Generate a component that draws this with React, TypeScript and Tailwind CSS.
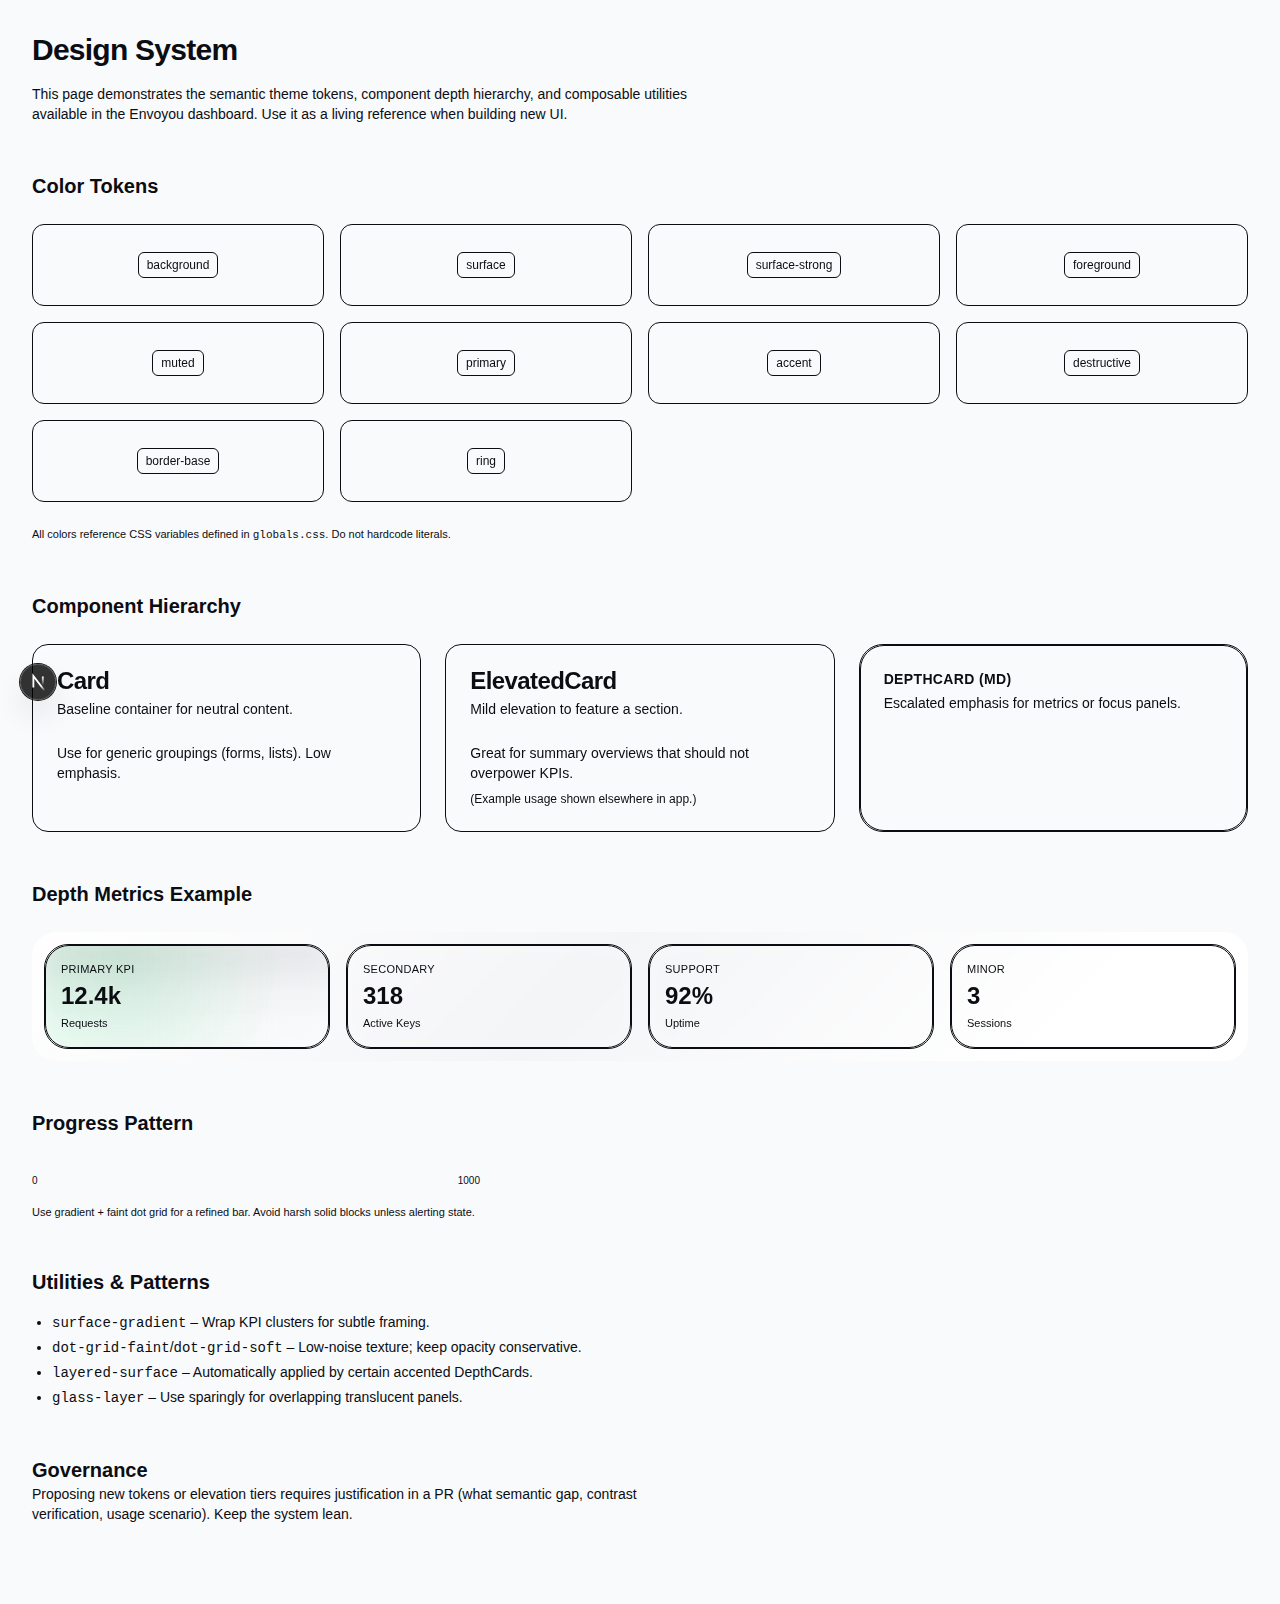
import type { ReactNode } from "react";

const TOKENS = [
  "background",
  "surface",
  "surface-strong",
  "foreground",
  "muted",
  "primary",
  "accent",
  "destructive",
  "border-base",
  "ring",
];

const METRICS = [
  { label: "PRIMARY KPI", value: "12.4k", hint: "Requests", accent: true },
  { label: "SECONDARY", value: "318", hint: "Active Keys", accent: false },
  { label: "SUPPORT", value: "92%", hint: "Uptime", accent: false },
  { label: "MINOR", value: "3", hint: "Sessions", accent: false },
];

const MONO = "font-['Liberation_Mono',monospace]";

function Heading({ children }: { children: ReactNode }) {
  return <h2 className="text-xl font-semibold">{children}</h2>;
}

function Card({ title, lead, children }: { title: string; lead: string; children: ReactNode }) {
  return (
    <div className="rounded-2xl border border-[#0b0d12] p-6 shadow-[inset_0_0_24px_rgba(255,255,255,0.35)] backdrop-blur-[1px]">
      <h3 className="text-2xl leading-6 font-semibold tracking-tight">{title}</h3>
      <p className="mt-1.5 text-sm">{lead}</p>
      <div className="mt-6 text-sm">{children}</div>
    </div>
  );
}

function DepthCard({ className, accent, children }: { className: string; accent?: boolean; children: ReactNode }) {
  return (
    <div className={`relative rounded-3xl border border-[#0b0d12] backdrop-blur-[1px] ${className}`}>
      {accent && (
        <div className="absolute inset-0 rounded-[inherit] bg-[radial-gradient(circle_at_28%_5%,rgba(34,160,90,0.12),rgba(34,160,90,0.03)_50%,transparent_75%),linear-gradient(to_bottom,rgba(0,0,0,0.085),rgba(0,0,0,0.025)_45%,transparent_80%),linear-gradient(to_right,rgba(230,250,239,0.8),rgba(232,248,240,0.7)_30%,rgba(248,249,251,0.8)_85%)]" />
      )}
      <div className="absolute inset-0 rounded-[inherit] border border-[#0b0d12] shadow-[inset_0_0_24px_rgba(255,255,255,0.35)]" />
      <div className="relative">{children}</div>
    </div>
  );
}

function DevBadge() {
  return (
    <div className="absolute top-[664px] left-5 flex size-9 items-center justify-center rounded-full bg-black/80 shadow-[0_0_0_1px_#171717,inset_0_0_0_1px_rgba(255,255,255,0.14),0_16px_32px_-8px_rgba(0,0,0,0.24)]">
      <svg className="size-10 shrink-0" viewBox="0 0 40 40" fill="none">
        <defs>
          <linearGradient id="diag" x1="9.95555" y1="11.1226" x2="15.4778" y2="17.9671" gradientUnits="userSpaceOnUse">
            <stop stopColor="white" />
            <stop offset="0.604072" stopColor="white" stopOpacity="0.15" />
          </linearGradient>
          <linearGradient id="stem" x1="11.8222" y1="1.40039" x2="11.791" y2="10.5" gradientUnits="userSpaceOnUse">
            <stop stopColor="white" />
            <stop offset="1" stopColor="white" stopOpacity="0" />
          </linearGradient>
        </defs>
        <g transform="translate(13 13)" strokeWidth="1.86">
          <path d="M13.3 15.2L2.34 1V12.6" stroke="url(#diag)" />
          <path d="M11.825 1.5V13.1" stroke="url(#stem)" />
        </g>
      </svg>
    </div>
  );
}

export default function App() {
  return (
    <div className="relative min-h-[1604px] bg-[#f9fafc] font-['Liberation_Sans',Arial,sans-serif] text-[#0b0d12]">
      <main className="space-y-12 p-8">
        <header className="space-y-4">
          <h1 className="text-3xl font-bold tracking-tight">Design System</h1>
          <p className="max-w-2xl text-sm">
            This page demonstrates the semantic theme tokens, component depth hierarchy, and composable utilities
            available in the Envoyou dashboard. Use it as a living reference when building new UI.
          </p>
        </header>

        <section className="space-y-6">
          <Heading>Color Tokens</Heading>
          <div className="grid grid-cols-4 gap-4">
            {TOKENS.map((t) => (
              <div key={t} className="flex h-[82px] items-center justify-center rounded-xl border border-[#0b0d12]">
                <span className="rounded-md border border-[#0b0d12] px-2 py-1 text-xs backdrop-blur-[1px]">{t}</span>
              </div>
            ))}
          </div>
          <p className="text-[11px]">
            All colors reference CSS variables defined in <code className={MONO}>globals.css</code>. Do not hardcode
            literals.
          </p>
        </section>

        <section className="space-y-6">
          <Heading>Component Hierarchy</Heading>
          <div className="grid h-[188px] grid-cols-3 gap-6">
            <Card title="Card" lead="Baseline container for neutral content.">
              <p>Use for generic groupings (forms, lists). Low emphasis.</p>
            </Card>
            <Card title="ElevatedCard" lead="Mild elevation to feature a section.">
              <p>Great for summary overviews that should not overpower KPIs.</p>
              <p className="mt-2 text-xs">(Example usage shown elsewhere in app.)</p>
            </Card>
            <DepthCard className="p-6">
              <h3 className="text-sm font-semibold tracking-wide">DEPTHCARD (MD)</h3>
              <p className="mt-1 text-sm">Escalated emphasis for metrics or focus panels.</p>
            </DepthCard>
          </div>
        </section>

        <section className="space-y-6">
          <Heading>Depth Metrics Example</Heading>
          <div className="grid grid-cols-4 gap-4 rounded-3xl bg-[linear-gradient(135deg,#ffffff_0%,#f4f5f7_45%,#ffffff_83%)] p-3">
            {METRICS.map((m) => (
              <DepthCard key={m.label} className="p-4" accent={m.accent}>
                <p className="text-[11px] tracking-wide">{m.label}</p>
                <p className="mt-[3px] text-2xl font-semibold">{m.value}</p>
                <p className="mt-[3px] text-[11px]">{m.hint}</p>
              </DepthCard>
            ))}
          </div>
        </section>

        <section className="space-y-6">
          <Heading>Progress Pattern</Heading>
          <div className="space-y-4">
            <div className="w-full max-w-md">
              <div className="h-3 rounded-full" />
              <div className="flex justify-between text-[10px]">
                <span>0</span>
                <span>1000</span>
              </div>
            </div>
            <p className="text-[11px]">
              Use gradient + faint dot grid for a refined bar. Avoid harsh solid blocks unless alerting state.
            </p>
          </div>
        </section>

        <section className="space-y-4">
          <Heading>Utilities &amp; Patterns</Heading>
          <ul className="list-disc space-y-1 pl-5 text-sm">
            <li>
              <code className={MONO}>surface-gradient</code> – Wrap KPI clusters for subtle framing.
            </li>
            <li>
              <code className={MONO}>dot-grid-faint</code>/<code className={MONO}>dot-grid-soft</code> – Low-noise
              texture; keep opacity conservative.
            </li>
            <li>
              <code className={MONO}>layered-surface</code> – Automatically applied by certain accented DepthCards.
            </li>
            <li>
              <code className={MONO}>glass-layer</code> – Use sparingly for overlapping translucent panels.
            </li>
          </ul>
        </section>

        <section>
          <Heading>Governance</Heading>
          <p className="max-w-2xl text-sm">
            Proposing new tokens or elevation tiers requires justification in a PR (what semantic gap, contrast
            verification, usage scenario). Keep the system lean.
          </p>
        </section>
      </main>
      <DevBadge />
    </div>
  );
}
